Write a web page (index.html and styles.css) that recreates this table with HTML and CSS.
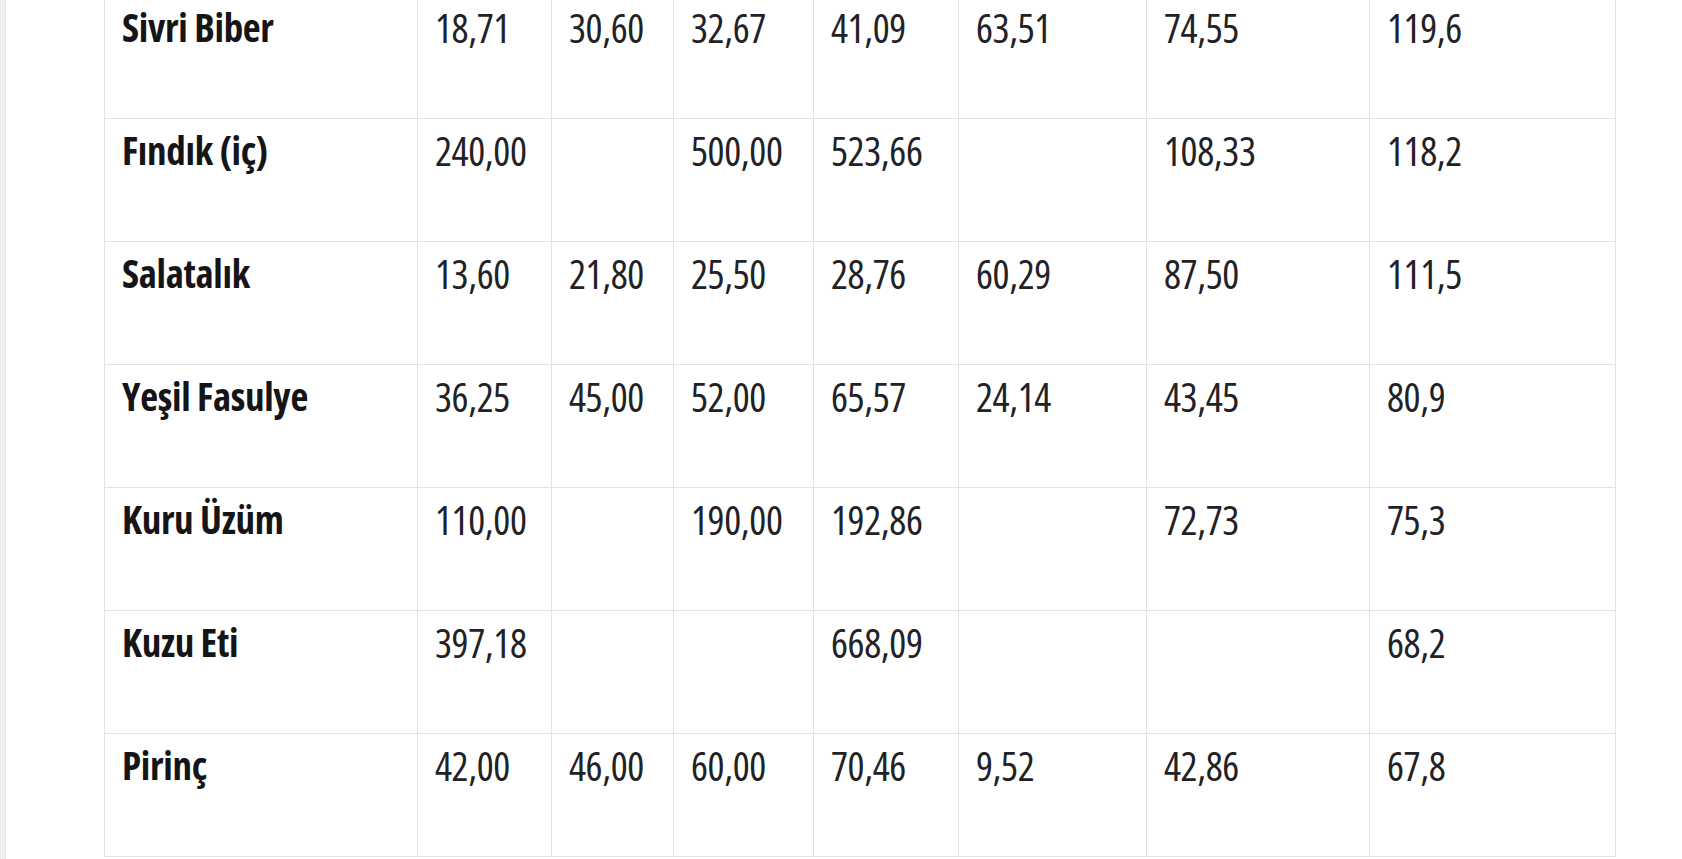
FILE: index.html
```html
<!DOCTYPE html>
<html lang="tr">
<head>
<meta charset="utf-8">
<title>Fiyat Tablosu</title>
<link rel="stylesheet" href="styles.css">
</head>
<body>
<div class="page">
  <div class="rail"></div>
  <main class="content">
    <table class="prices">
      <colgroup>
        <col class="c-name"><col class="c1"><col class="c2"><col class="c3"><col class="c4"><col class="c5"><col class="c6"><col class="c7">
      </colgroup>
      <tbody>
        <tr><th>Sivri Biber</th><td>18,71</td><td>30,60</td><td>32,67</td><td>41,09</td><td>63,51</td><td>74,55</td><td>119,6</td></tr>
        <tr><th>Fındık (iç)</th><td>240,00</td><td></td><td>500,00</td><td>523,66</td><td></td><td>108,33</td><td>118,2</td></tr>
        <tr><th>Salatalık</th><td>13,60</td><td>21,80</td><td>25,50</td><td>28,76</td><td>60,29</td><td>87,50</td><td>111,5</td></tr>
        <tr><th>Yeşil Fasulye</th><td>36,25</td><td>45,00</td><td>52,00</td><td>65,57</td><td>24,14</td><td>43,45</td><td>80,9</td></tr>
        <tr><th>Kuru Üzüm</th><td>110,00</td><td></td><td>190,00</td><td>192,86</td><td></td><td>72,73</td><td>75,3</td></tr>
        <tr><th>Kuzu Eti</th><td>397,18</td><td></td><td></td><td>668,09</td><td></td><td></td><td>68,2</td></tr>
        <tr><th>Pirinç</th><td>42,00</td><td>46,00</td><td>60,00</td><td>70,46</td><td>9,52</td><td>42,86</td><td>67,8</td></tr>
      </tbody>
    </table>
  </main>
</div>
</body>
</html>
```

FILE: styles.css
```css
html, body {
  margin: 0;
  padding: 0;
  background: #ffffff;
  overflow: hidden;
}

.page {
  display: flex;
  height: 859px;
  overflow: hidden;
}

.rail {
  flex: 0 0 5px;
  background: #eef0f3;
  border-right: 1px solid #e2e5ea;
}

.content {
  flex: 1;
  padding-left: 98px;
  margin-top: -5px;
}

.prices {
  table-layout: fixed;
  border-collapse: collapse;
  width: 1512px;
  font-family: "Open Sans", "Liberation Sans", Arial, sans-serif;
  font-stretch: 75%;
  color: #1c1c1e;
}

.c-name { width: 313px; }
.c1 { width: 134px; }
.c2 { width: 122px; }
.c3 { width: 140px; }
.c4 { width: 145px; }
.c5 { width: 188px; }
.c6 { width: 223px; }
.c7 { width: 246px; }

.prices th,
.prices td {
  border: 1px solid #dfe2e8;
  height: 123px;
  box-sizing: border-box;
  padding: 9px 10px 0 17px;
  vertical-align: top;
  text-align: left;
  line-height: 1.15;
  white-space: nowrap;
}

.prices th {
  font-weight: 700;
  font-size: 39px;
  letter-spacing: -0.3px;
  color: #151517;
}

.prices td {
  font-weight: 400;
  font-size: 40px;
  letter-spacing: -0.4px;
  color: #222226;
}
```
